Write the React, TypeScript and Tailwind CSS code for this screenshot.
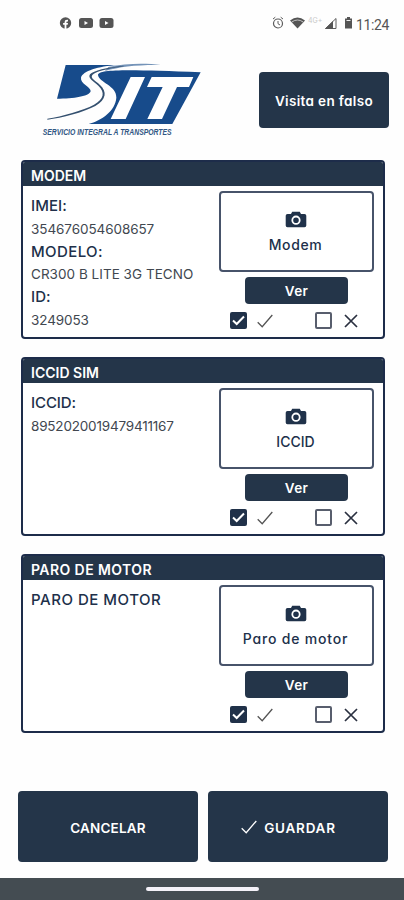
import React from "react";

const FONT = "font-['Inter','Noto_Sans',sans-serif] [font-feature-settings:'cv11','ss03']";

function Logo() {
  return (
    <svg viewBox="0 0 570 270" className="h-[90px] w-[190px] shrink-0">
      <path d="M107 30H262C205 34 158 48 153 68C150 86 182 94 182 108C180 124 130 131 81 131Z" fill="#174b8b" />
      <path d="M512 52L427 207H176C215 196 256 168 259 128C261 92 206 82 204 60C206 42 300 44 512 52Z" fill="#174b8b" />
      <path d="M235 36C290 24 350 24 392 30C320 29 270 35 225 48Z" fill="#7493b8" />
      <path d="M52 191C96 184 160 166 192 149C222 132 226 112 205 92C190 78 172 70 180 58C190 46 230 38 280 32L281 34C232 41 196 50 187 60C180 70 196 76 210 90C232 110 229 134 196 153C160 172 96 189 52 194Z" fill="#34506f" />
      <path d="M302 66H345L287 192H242ZM365 66H490L477 96H441L396 192H352L398 96H351Z" fill="#fff" />
      <text x="38" y="241" textLength="387" lengthAdjust="spacingAndGlyphs" fontFamily="Liberation Sans, sans-serif" fontSize="26" fontWeight="700" fontStyle="italic" fill="#315784">
        SERVICIO INTEGRAL A TRANSPORTES
      </text>
    </svg>
  );
}

function StatusBar() {
  return (
    <div className="flex h-[46px] shrink-0 items-center pl-[59px] pr-[15px]">
      <svg viewBox="0 0 56 14" className="h-[14px] w-[56px]" fill="#555">
        <circle cx="6.5" cy="7" r="5.7" />
        <path d="M5.6 13V8.7H4.1V6.9H5.6V6Q5.6 3.8 8 3.8H9V5.4H8.2Q7.4 5.4 7.4 6.2V6.9H9L8.7 8.7H7.4V13Z" fill="#fff" />
        <rect x="20" y="2" width="14" height="10" rx="2.5" />
        <path d="M25.5 5V9L29 7Z" fill="#fff" />
        <rect x="40.5" y="2" width="14" height="10" rx="2.5" />
        <path d="M46 5V9L49.500 7Z" fill="#fff" />
      </svg>
      <div className="ml-auto flex items-center">
        <svg viewBox="0 0 84 16" className="h-[16px] w-[84px]" fill="none" stroke="#5c5c5c">
          <circle cx="6" cy="8.500" r="4.500" strokeWidth="1.200" />
          <path d="M6 6V8.700L8 10M1 4L3.300 2.200M11 4L8.700 2.200" />
          <path d="M18 5.500Q25.500 -.5 33 5.500L25.500 13.500Z" fill="#555" stroke="none" />
          <path d="M19.800 7Q25.500 3 31.200 7" stroke="#ddd" strokeWidth=".8" />
          <text x="36" y="7.500" fontSize="7" fill="#c9c9c9" stroke="none" fontFamily="Inter, sans-serif">4G+</text>
          <path d="M53.500 13.500H64V3.500Z" strokeWidth="1" />
          <path d="M53 14L61 6V14Z" fill="#555" stroke="none" />
          <path d="M73 3.500H75V2H78V3.500H80V13.500H73Z" fill="#555" stroke="none" />
          <path d="M74.500 5.500H78.500" stroke="#eee" />
        </svg>
        <span className="mt-[3px] w-[33px] text-[14px] leading-none tracking-[-0.4px] text-[#555] font-['Roboto',sans-serif]">11:24</span>
      </div>
    </div>
  );
}

function Camera() {
  return (
    <svg viewBox="0 0 22 17" className="h-[17px] w-[22px]">
      <path d="M2.500 3H6L7.200 .8H14.800L16 3H19.500Q21.300 3 21.300 4.800V14.500Q21.300 16.300 19.500 16.300H2.500Q.7 16.300 .7 14.500V4.800Q.7 3 2.500 3Z" fill="#20324a" />
      <circle cx="11" cy="9.200" r="3.700" fill="none" stroke="#fff" strokeWidth="1.800" />
    </svg>
  );
}

function Check({ className }: { className: string }) {
  return (
    <svg viewBox="0 0 16 14" className={className} fill="none" stroke="currentColor">
      <path d="M.7 8.200L5.200 12.700L15.300 1" strokeWidth="1.300" />
    </svg>
  );
}

type CardProps = {
  title: string;
  photo: string;
  titleTracking: string;
  photoTracking: string;
  children: React.ReactNode;
};

function Card({ title, photo, titleTracking, photoTracking, children }: CardProps) {
  return (
    <section className="flex h-[179px] flex-col overflow-hidden rounded-[4px] border-2 border-[#1d2c4a] bg-white">
      <h2 className={`h-[24px] shrink-0 bg-[#243549] pl-2 pt-[2px] text-[14px] font-semibold leading-[23px] text-white ${titleTracking}`}>{title}</h2>
      <div className="flex flex-1 justify-between pl-[8px] pr-[9px]">
        <div className="pt-[9px] text-[#20304a]">{children}</div>
        <div className="flex w-[155px] flex-col items-center pt-[5px]">
          <button className="flex h-[81px] w-[155px] flex-col items-center rounded-[4px] border-2 border-[#47536a] pr-[2px] pt-[18px] text-[#20304a]">
            <Camera />
            <span className={`mt-[7px] whitespace-nowrap text-[14px] font-medium leading-[20px] ${photoTracking}`}>{photo}</span>
          </button>
          <button className="mt-[5px] h-[27px] w-[103px] shrink-0 rounded-[4px] bg-[#243549] pt-[2px] text-[13.5px] font-semibold leading-none tracking-[0.3px] text-white">Ver</button>
          <div className="mt-[8px] flex w-full items-center pl-[11px] text-[#20304a]">
            <span className="flex h-[17px] w-[17px] items-center justify-center rounded-[2px] bg-[#203149]">
              <svg viewBox="0 0 13 11" className="h-[11px] w-[13px]" fill="none" stroke="#fff" strokeWidth="2"><path d="M1 5.500L4.700 9L12 1.500" /></svg>
            </span>
            <Check className="ml-[10px] h-[14px] w-[16px] text-[#555]" />
            <span className="ml-[42px] h-[17px] w-[17px] rounded-[2px] border-2 border-[#585e6d]" />
            <svg viewBox="0 0 14 14" className="ml-[12px] h-[14px] w-[14px]" fill="none" stroke="#2a3040" strokeWidth="1.700"><path d="M1 1L13 13M13 1L1 13" /></svg>
          </div>
        </div>
      </div>
    </section>
  );
}

const label = "text-[15px] font-medium leading-[22.500px] whitespace-nowrap";
const value = "text-[13.5px] leading-[23px] whitespace-nowrap text-[#414750]";

export default function App() {
  return (
    <main className={`flex h-[900px] w-[404px] flex-col overflow-hidden bg-[#fefefe] ${FONT}`}>
      <StatusBar />
      <header className="flex h-[114px] shrink-0 pl-[30px] pr-[15px] pt-[9px]">
        <Logo />
        <button className="ml-auto mt-[17px] h-[56px] w-[130px] rounded-[4px] bg-[#243549] pt-[2px] text-[13.5px] font-semibold tracking-[0.35px] text-white">Visita en falso</button>
      </header>
      <div className="flex shrink-0 flex-col gap-[18px] pl-[21px] pr-[19px]">
        <Card title="MODEM" photo="Modem" titleTracking="tracking-[0px]" photoTracking="tracking-[0.6px]">
          <p className={`${label} tracking-[0.1px]`}>IMEI:</p>
          <p className={`${value} tracking-[-0.08px]`}>354676054608657</p>
          <p className={`${label} tracking-[0.4px]`}>MODELO:</p>
          <p className={`${value} tracking-[0.03px]`}>CR300 B LITE 3G TECNO</p>
          <p className={`${label} tracking-[0.1px]`}>ID:</p>
          <p className={`${value} tracking-[-0.1px]`}>3249053</p>
        </Card>
        <Card title="ICCID SIM" photo="ICCID" titleTracking="tracking-[0px]" photoTracking="tracking-[0px]">
          <p className={`${label} tracking-[-0.1px]`}>ICCID:</p>
          <p className={`${value} tracking-[-0.19px]`}>8952020019479411167</p>
        </Card>
        <Card title="PARO DE MOTOR" photo="Paro de motor" titleTracking="tracking-[0.42px]" photoTracking="tracking-[0.8px]">
          <p className={`${label} tracking-[0.52px]`}>PARO DE MOTOR</p>
        </Card>
      </div>
      <footer className="mt-[58px] flex shrink-0 gap-[10px] pl-[18px] pr-[16px] text-[13.5px] font-semibold text-white">
        <button className="h-[71px] w-[180px] shrink-0 rounded-[4px] bg-[#243549] pt-[3px] tracking-[0.2px]">CANCELAR</button>
        <button className="flex h-[71px] w-[180px] shrink-0 items-center justify-center gap-[7px] rounded-[4px] bg-[#243549] pr-[19px] tracking-[0.75px]">
          <Check className="h-[14px] w-[16px]" />
          <span className="pt-[3px]">GUARDAR</span>
        </button>
      </footer>
      <div className="mt-auto flex h-[22px] items-center justify-center bg-[#444c52]">
        <span className="h-[4px] w-[113px] rounded-full bg-[#f4f1f8]" />
      </div>
    </main>
  );
}
